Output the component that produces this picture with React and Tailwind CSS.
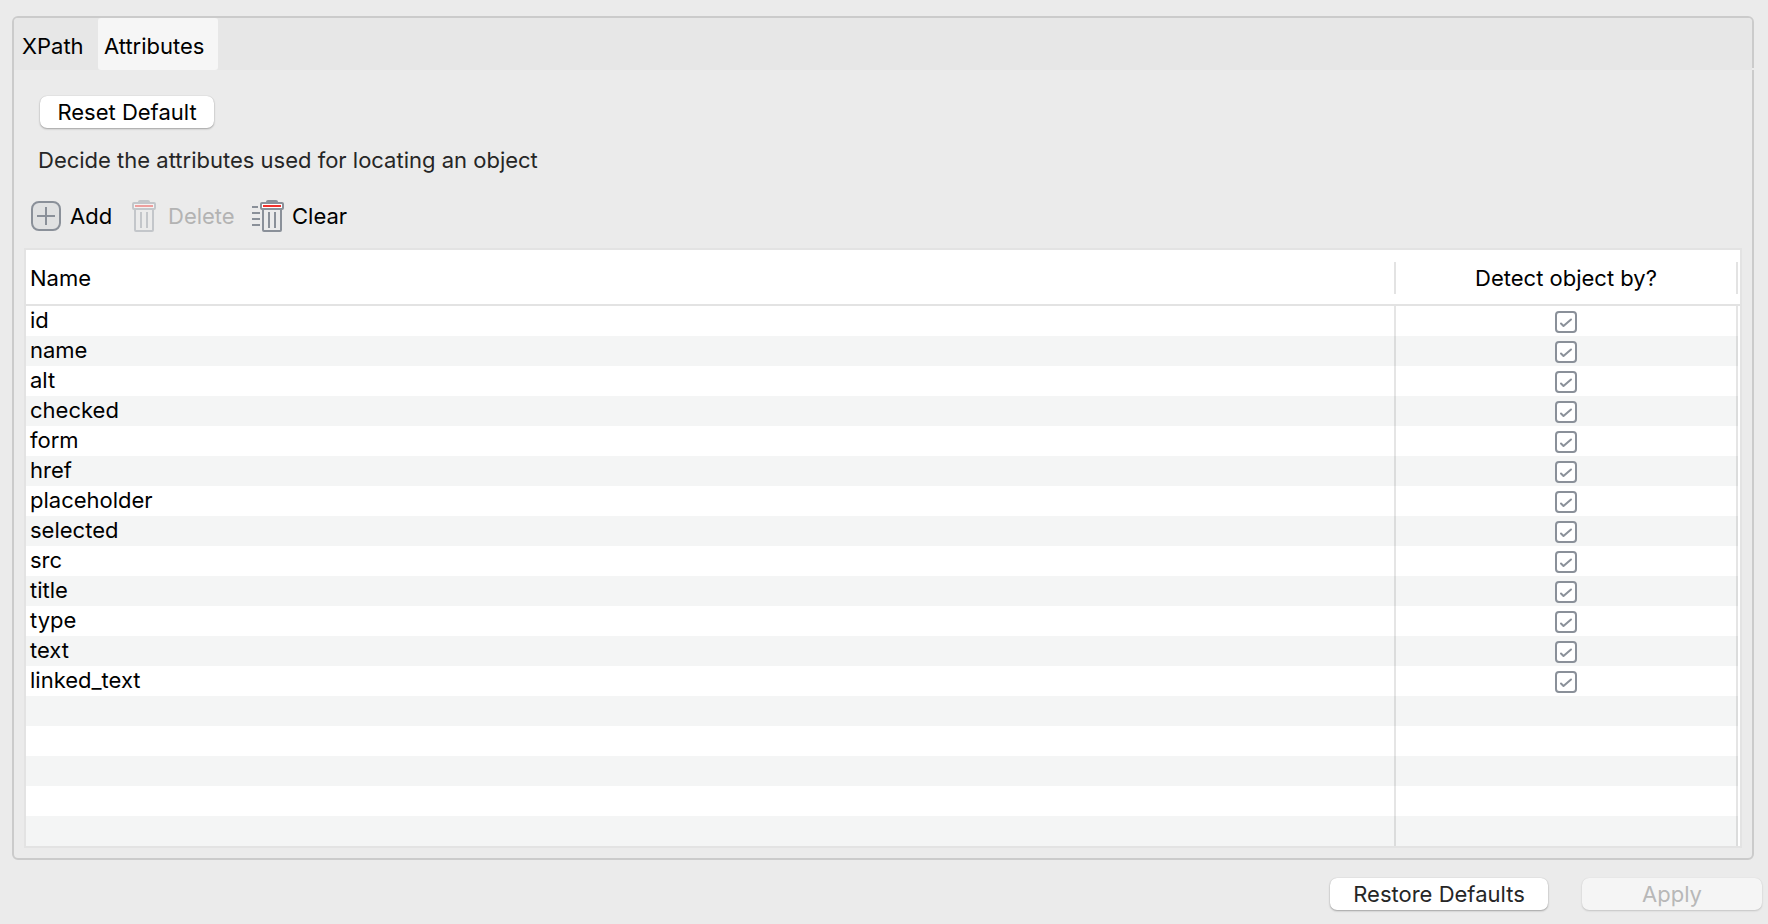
import React, { useState } from 'react';

const ATTRIBUTES = [
  'id',
  'name',
  'alt',
  'checked',
  'form',
  'href',
  'placeholder',
  'selected',
  'src',
  'title',
  'type',
  'text',
  'linked_text',
];

const EMPTY_ROWS = 5;

function AddIcon() {
  return (
    <svg width="30" height="30" viewBox="0 0 30 30" fill="none" aria-hidden="true">
      <rect x="1" y="1" width="28" height="28" rx="7" fill="#e0e1e2" stroke="#8a9099" strokeWidth="2" />
      <path d="M15 6v18M6 15h18" stroke="#8a9099" strokeWidth="2" />
    </svg>
  );
}

function TrashCan() {
  return (
    <>
      <path d="M6 2.5V1.5Q6 0 8 0h8q2 0 2 1.5v1z" fill="#8a9099" />
      <rect x="1" y="3" width="22" height="6" rx="1" fill="#fff" stroke="#8a9099" strokeWidth="2" />
      <path d="M3 6h18" stroke="#f0302c" strokeWidth="2" />
      <path d="M3 9v21q0 1 1 1h16q1 0 1-1V9" stroke="#8a9099" strokeWidth="2" />
      <path d="M9 12v16M15 12v16" stroke="#8a9099" strokeWidth="2" />
    </>
  );
}

function DeleteIcon() {
  return (
    <svg width="24" height="32" viewBox="0 0 24 32" fill="none" className="opacity-40" aria-hidden="true">
      <TrashCan />
    </svg>
  );
}

function ClearIcon() {
  return (
    <svg width="32" height="32" viewBox="0 0 32 32" fill="none" aria-hidden="true">
      <path d="M0 7h6M0 13h8M0 19h8M0 25h8" stroke="#8a9099" strokeWidth="2" />
      <g transform="translate(8 0)">
        <TrashCan />
      </g>
    </svg>
  );
}

function CheckBox({ labelledBy, checked, onChange }) {
  return (
    <span className="grid place-items-center">
      <input
        type="checkbox"
        aria-labelledby={labelledBy}
        checked={checked}
        onChange={onChange}
        className="peer col-start-1 row-start-1 size-[22px] appearance-none rounded-[4px] border-2 border-[#8a9099] bg-white"
      />
      <svg
        width="22"
        height="22"
        viewBox="0 0 22 22"
        fill="none"
        className="pointer-events-none invisible col-start-1 row-start-1 peer-checked:visible"
        aria-hidden="true"
      >
        <path d="M6 12.5L8.5 15L16 8.5" stroke="#8a9099" strokeWidth="2" strokeLinecap="round" strokeLinejoin="round" />
      </svg>
    </span>
  );
}

export default function App() {
  const [detected, setDetected] = useState(() => new Set(ATTRIBUTES));

  const toggle = (name) => {
    const next = new Set(detected);
    if (!next.delete(name)) next.add(name);
    setDetected(next);
  };

  return (
    <main className="min-h-screen bg-[#ebebeb] pt-4 font-['Inter',sans-serif] text-[22px] leading-7 text-black">
      <section className="ml-3 mr-[14px] rounded-[6px] border-2 border-[#cbcbcb]">
        {/* Tabs */}
        <div
          role="tablist"
          className="relative flex h-[52px] rounded-t-[4px] bg-[#e7e7e7] after:absolute after:-right-[2px] after:bottom-0 after:h-[2px] after:w-[2px] after:bg-[#ebebeb]"
        >
          <button type="button" role="tab" aria-selected="false" className="w-[84px] pl-2 pt-1 text-left">
            XPath
          </button>
          <button
            type="button"
            role="tab"
            aria-selected="true"
            className="w-[120px] rounded-[3px] bg-[#f6f6f6] pl-[6px] pt-1 text-left"
          >
            Attributes
          </button>
        </div>

        <div className="px-[10px] pb-[10px] pt-[26px]">
          <button
            type="button"
            className="ml-4 block h-8 w-[174px] rounded-[7px] bg-white leading-8 shadow-[0_0_1px_rgba(0,0,0,0.2),0_1px_2px_rgba(0,0,0,0.3)]"
          >
            Reset Default
          </button>
          <p className="ml-[14px] mt-[18px] text-[#262626]">Decide the attributes used for locating an object</p>

          {/* Toolbar */}
          <div role="toolbar" className="ml-[7px] mt-[26px] flex h-8 items-center">
            <button type="button" className="flex w-[101px] items-center gap-[9px]">
              <AddIcon />
              Add
            </button>
            <button type="button" disabled className="flex w-[120px] items-center gap-3 text-[#b3b3b3]">
              <DeleteIcon />
              Delete
            </button>
            <button type="button" className="flex items-center gap-2">
              <ClearIcon />
              Clear
            </button>
          </div>

          {/* Attribute table */}
          <div className="mt-4 border-2 border-[#e3e3e3] bg-white">
            <table className="w-full table-fixed border-separate border-spacing-0">
              <colgroup>
                <col />
                <col className="w-[342px]" />
                <col className="w-[2px]" />
              </colgroup>
              <thead>
                <tr className="h-14">
                  <th className="border-b-2 border-[#e3e3e3] p-0 pt-[2px] text-left font-normal">
                    <div className="h-8 border-r-2 border-[#e3e3e3] pl-1 leading-8">Name</div>
                  </th>
                  <th className="border-b-2 border-[#e3e3e3] p-0 pt-[2px] text-center font-normal">
                    <div id="detect-heading" className="h-8 border-r-2 border-[#e3e3e3] leading-8">
                      Detect object by?
                    </div>
                  </th>
                  <td className="border-b-2 border-[#e3e3e3] p-0" />
                </tr>
              </thead>
              <tbody>
                {ATTRIBUTES.map((name) => (
                  <tr key={name} className="h-[30px] even:bg-[#f4f5f5]">
                    <td id={`attr-${name}`} className="border-r-2 border-black/10 p-0 pl-1 align-top">
                      {name}
                    </td>
                    <td className="border-r-2 border-black/10 p-0 pt-[2px]">
                      <CheckBox
                        labelledBy={`detect-heading attr-${name}`}
                        checked={detected.has(name)}
                        onChange={() => toggle(name)}
                      />
                    </td>
                    <td className="bg-white p-0" />
                  </tr>
                ))}
                {Array.from({ length: EMPTY_ROWS }, (_, i) => (
                  <tr key={i} className="h-[30px] even:bg-[#f4f5f5]">
                    <td className="border-r-2 border-black/10 p-0" />
                    <td className="border-r-2 border-black/10 p-0" />
                    <td className="bg-white p-0" />
                  </tr>
                ))}
              </tbody>
            </table>
          </div>
        </div>
      </section>

      <footer className="flex justify-end gap-[34px] pb-[14px] pr-[6px] pt-[18px]">
        <button
          type="button"
          className="h-8 w-[218px] rounded-[7px] bg-white leading-8 text-[#262626] shadow-[0_0_1px_rgba(0,0,0,0.2),0_1px_2px_rgba(0,0,0,0.3)]"
        >
          Restore Defaults
        </button>
        <button
          type="button"
          disabled
          className="h-8 w-[180px] rounded-[7px] bg-[#f5f5f5] leading-8 text-[#b8b8b8] shadow-[0_0_1px_rgba(0,0,0,0.1),0_1px_2px_rgba(0,0,0,0.16)]"
        >
          Apply
        </button>
      </footer>
    </main>
  );
}
